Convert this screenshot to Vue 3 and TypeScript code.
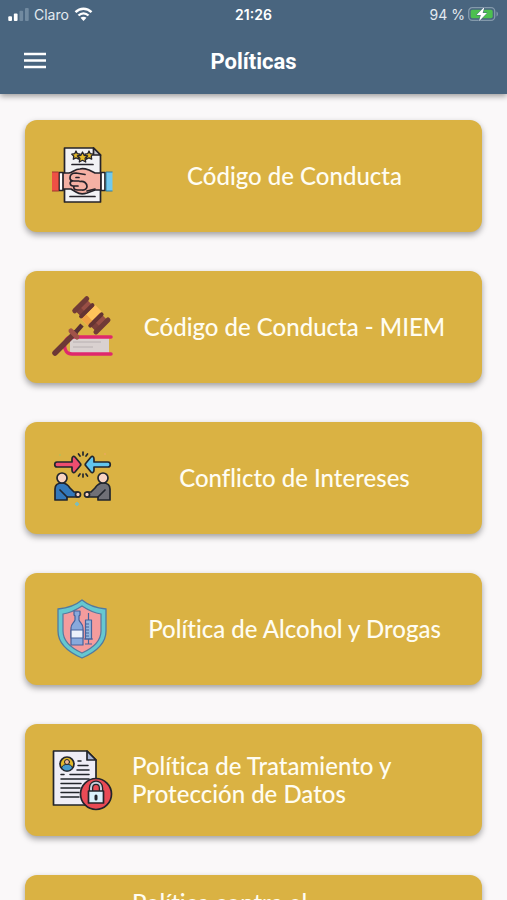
<script setup lang="ts">
type IconName = 'agreement' | 'gavel' | 'conflict' | 'shield' | 'privacy' | 'none'

interface Policy {
  title: string
  icon: IconName
}

const policies: Policy[] = [
  { title: 'Código de Conducta', icon: 'agreement' },
  { title: 'Código de Conducta - MIEM', icon: 'gavel' },
  { title: 'Conflicto de Intereses', icon: 'conflict' },
  { title: 'Política de Alcohol y Drogas', icon: 'shield' },
  { title: 'Política de Tratamiento y Protección de Datos', icon: 'privacy' },
  { title: 'Política contra el Hostigamiento Sexual en el Trabajo', icon: 'none' },
]
</script>

<template>
  <div class="screen">
    <header class="header">
      <div class="status">
        <div class="carrier">
          <svg class="signal" viewBox="0 0 22 14" aria-hidden="true">
            <rect x="0" y="9" width="4" height="5" rx="1" fill="#fff" />
            <rect x="6" y="6" width="4" height="8" rx="1" fill="#fff" />
            <rect x="12" y="3" width="4" height="11" rx="1" fill="#718aa0" />
            <rect x="18" y="0" width="4" height="14" rx="1" fill="#718aa0" />
          </svg>
          <span>Claro</span>
          <svg class="wifi" viewBox="0 0 18 14" aria-hidden="true">
            <g fill="none" stroke="#fff" stroke-width="2.4">
              <path d="M1 5.2C5.500.6 12.500.6 17 5.200" />
              <path d="M4 8.500c2.900-2.900 7.100-2.900 10 0" />
            </g>
            <path d="M9 14l-3-3.200c1.700-1.500 4.300-1.500 6 0z" fill="#fff" />
          </svg>
        </div>
        <time class="clock">21:26</time>
        <div class="power">
          <span>94 %</span>
          <svg class="battery" viewBox="0 0 31 16" aria-hidden="true">
            <rect x=".7" y="1.700" width="26" height="12.600" rx="3.500" fill="none" stroke="#8399ab" stroke-width="1.300" />
            <rect x="2.700" y="3.700" width="22" height="8.600" rx="1.800" fill="#4cc04f" />
            <path d="M28.500 5.500c2 .8 2 4.200 0 5z" fill="#8399ab" />
            <path d="M16.500.8 8.500 9h4.300l-1.800 6.200L19 7h-4.300z" fill="#fff" stroke="#49657f" stroke-width="1" paint-order="stroke" />
          </svg>
        </div>
      </div>
      <div class="toolbar">
        <button class="menu" type="button" aria-label="Menú">
          <svg viewBox="0 0 24 18" aria-hidden="true">
            <path d="M1 2h22M1 8.500h22M1 15h22" stroke="#fff" stroke-width="2.600" />
          </svg>
        </button>
        <h1 class="title">Políticas</h1>
      </div>
    </header>

    <main class="list">
      <button v-for="policy in policies" :key="policy.title" class="card" type="button">
        <svg v-if="policy.icon === 'agreement'" class="icon" viewBox="0 0 64 64" aria-hidden="true">
          <g stroke="#25232a" stroke-width="1.700" stroke-linejoin="round" stroke-linecap="round">
            <path d="M14.500 4h29l7 7v47h-36z" fill="#f2f2f5" />
            <path d="M43.500 4v7h7z" fill="#c4c4cc" />
            <path d="M22 20.500h21M20 52.500h25" fill="none" />
            <g fill="#e8bd2b" stroke-width="1.300">
              <path d="m26 7 1.300 2.700 3 .4-2.200 2.100.5 3-2.600-1.400-2.700 1.400.5-3-2.100-2.100 3-.4z" />
              <path d="m39 7 1.300 2.700 3 .4-2.100 2.100.5 3-2.700-1.400-2.600 1.400.5-3-2.200-2.100 3-.4z" />
              <path d="m32.500 8 1.600 3.300 3.600.5-2.600 2.500.6 3.700-3.200-1.700-3.200 1.700.6-3.700-2.600-2.500 3.600-.5z" />
            </g>
            <path d="M12 29h7c4-1 6-4 11-4 3-1 6 0 9 1l6 3h6v17h-6l-8 3c-3 1-8 1-11-1l-5-3h-9z" fill="#f5b1a4" />
            <path d="M35 30.500l-9-1.500c-4 0-6 2-6 5 0 2 2 3 4 3h5" fill="none" />
            <path d="M22 37c-3 1-2 5 1 5h5M24 42c-1 3 1 4 4 4h4M29 33.500h-3M30 37.500c4-1 7 2 7 5 0 2-2 4-5 3.500M45 45l-8 2" fill="none" />
            <path d="M9 28.500h4v18H9z" fill="#fff" />
            <path d="M51 28.500h4v18h-4z" fill="#fff" />
          </g>
          <path d="M2 28h7v19H2z" fill="#ee5145" />
          <path d="M2 28h6.500v19H2" fill="none" stroke="#a13830" />
          <path d="M56 28h6.500v19H56z" fill="#71c9ef" />
          <path d="M62.500 28H56v19h6.500" fill="none" stroke="#337d9f" />
        </svg>

        <svg v-else-if="policy.icon === 'gavel'" class="icon" viewBox="0 0 64 64" aria-hidden="true">
          <path d="M20 42h39v17H20z" fill="#d9d1d0" />
          <path d="M23 47h28M23 52h20" stroke="#b8b0b1" stroke-width="1" />
          <path d="M61 42H22c-10 0-10 17 0 17h39" fill="none" stroke="#df286d" stroke-width="3.500" stroke-linecap="round" />
          <path d="M5 58l20-20" stroke="#6c3836" stroke-width="5.500" stroke-linecap="round" />
          <path d="M25 38l7-8" stroke="#583034" stroke-width="4.500" />
          <path d="M21 36l6 6" stroke="#a15349" stroke-width="5" stroke-linecap="round" />
          <g transform="rotate(45 41 20)">
            <rect x="27" y="12" width="29" height="16" fill="#994f45" />
            <path d="M27 22h29v6H27z" fill="#7c3f3a" />
            <rect x="37" y="10" width="9" height="20" fill="#ffc35a" />
            <path d="M37 23h9v7h-9z" fill="#efa243" />
            <rect x="24" y="9" width="5" height="22" rx="2.500" fill="#713b37" />
            <rect x="33" y="10" width="4" height="20" rx="2" fill="#653433" />
            <rect x="46" y="10" width="4" height="20" rx="2" fill="#653433" />
            <rect x="54" y="9" width="5" height="22" rx="2.500" fill="#713b37" />
          </g>
        </svg>

        <svg v-else-if="policy.icon === 'conflict'" class="icon" viewBox="0 0 64 64" aria-hidden="true">
          <g stroke="#22262e" stroke-width="1.700" stroke-linejoin="round" stroke-linecap="round">
            <path d="M7 16h15v-3c0-3 2-3 3-2l5 6c1 1 1 2 0 3l-5 6c-1 1-3 1-3-2v-3H7c-3 0-3-5 0-5z" fill="#ef4d70" />
            <path d="M58 16H44v-3c0-3-2-3-3-2l-5 6c-1 1-1 2 0 3l5 6c1 1 3 1 3-2v-3h14c3 0 3-5 0-5z" fill="#62c5ed" />
            <path d="M28.500 8l1.500 2M33 6v3M37.500 8l-1.500 2M28.500 30l1.500-2M33 31v-3M37.500 30l-1.500-2" fill="none" />
            <path d="M5 54V43c0-4 3-6 7-6 4 0 6 2 8 5l4 4h4v5H17v3z" fill="#3378ba" />
            <path d="M60 54V43c0-4-3-6-7-6-4 0-6 2-8 5l-4 4h-4v5h11v3z" fill="#707077" />
            <path d="M10 44l7 7M55 44l-7 7" fill="none" />
            <circle cx="12" cy="32" r="5" fill="#f9d3c2" />
            <circle cx="53" cy="32" r="5" fill="#f9d3c2" />
            <circle cx="28" cy="48.500" r="2.500" fill="#f9d3c2" />
            <circle cx="37" cy="48.500" r="2.500" fill="#f9d3c2" />
          </g>
          <path d="M25 58h4M27 56v4" stroke="#82bdb5" stroke-width="2" />
          <circle cx="10" cy="9" r="1" fill="#b9bd57" />
          <circle cx="55" cy="8" r="1" fill="#e8aa5c" />
        </svg>

        <svg v-else-if="policy.icon === 'shield'" class="icon" viewBox="0 0 64 64" aria-hidden="true">
          <path d="M32 3c7 6 14 8 24 9v22c0 12-10 21-24 27C18 55 8 46 8 34V12c10-1 17-3 24-9z" fill="#66c8d0" stroke="#507aa1" stroke-width="1.300" />
          <path d="M32 9c6 4 12 7 19 8v17c0 10-8 17-19 22-11-5-19-12-19-22V17c7-1 13-4 19-8z" fill="#f49c9d" stroke="#58789f" stroke-width="1.200" />
          <g stroke="#46639c" stroke-width="1.200" stroke-linejoin="round">
            <path d="M24 14h6v4l-1 1v4c1 3 4 4 4 8v17H21V31c0-4 3-5 4-8v-4l-1-1z" fill="#88a9dc" />
            <path d="M21 33h12v8H21z" fill="#ecf1fb" />
            <path d="M35.500 23h6v19h-6z" fill="#94b8df" />
            <path d="M38.500 16v7M36 27h3M36 30h3M36 33h3M36 36h3M36 39h3M34 42h9M38.500 42v5M35 47h7" fill="none" />
          </g>
        </svg>

        <svg v-else-if="policy.icon === 'privacy'" class="icon" viewBox="0 0 64 64" aria-hidden="true">
          <g stroke="#22242b" stroke-width="1.700" stroke-linejoin="round" stroke-linecap="round">
            <path d="M3.500 3H37l9 9v45H3.500z" fill="#efedf6" />
            <path d="M37 3v9h9z" fill="#a9b5d5" />
            <circle cx="17" cy="16" r="7" fill="#e2b928" />
            <path d="M11.500 20c1-5 10-5 11 0-3 4-8 4-11 0z" fill="#469bce" stroke-width="1" />
            <circle cx="17" cy="14" r="2.500" fill="#efba99" stroke-width="1" />
            <path d="M28 13h3M28 17.500h10M27 22h12M11 26.500h3M20 26.500h19M11 31h28M11 35.500h20M11 40h19M11 44.500h18M11 49h18" fill="none" stroke-width="1.500" />
            <circle cx="46" cy="46" r="15.500" fill="#e94a55" />
            <path d="M41 43v-3c0-7 10-7 10 0v3" fill="none" stroke-width="4.500" />
            <path d="M41 43v-3c0-7 10-7 10 0v3" fill="none" stroke="#c8cedb" stroke-width="2" />
            <path d="M38.500 43h15v12h-15z" fill="#daf0fb" />
            <path d="M46 48v3" fill="none" stroke-width="3" />
          </g>
        </svg>

        <span v-else class="icon"></span>
        <span class="label"><span>{{ policy.title }}</span></span>
      </button>
    </main>
  </div>
</template>

<style>
body {
  margin: 0;
  background: #faf8f9;
}
</style>

<style scoped>
.screen {
  min-height: 100vh;
  background: #faf8f9;
  color: #fff;
  font-family: Inter, 'Liberation Sans', sans-serif;
}

.header {
  position: sticky;
  top: 0;
  z-index: 1;
  height: 94px;
  background: #49657f;
  box-shadow: 0 2px 6px rgba(0, 0, 0, 0.4);
}

.status {
  display: grid;
  grid-template-columns: 1fr auto 1fr;
  align-items: center;
  height: 28px;
  padding: 0 8px;
  font-size: 14px;
}

.carrier,
.power {
  display: flex;
  align-items: center;
  gap: 5px;
  color: #e3eaf0;
}

.power {
  justify-content: flex-end;
  gap: 3px;
}

.signal {
  width: 21px;
  height: 13px;
}

.wifi {
  width: 19px;
  height: 14px;
}

.battery {
  width: 31px;
  height: 16px;
}

.clock {
  font-weight: 600;
}

.toolbar {
  display: grid;
  grid-template-columns: 1fr auto 1fr;
  align-items: center;
  height: 66px;
  padding: 0 18px;
}

.menu {
  display: flex;
  justify-self: start;
  padding: 5px;
  border: 0;
  background: none;
  cursor: pointer;
}

.menu svg {
  width: 24px;
  height: 18px;
}

.title {
  margin: 0;
  font-family: Roboto, 'Liberation Sans', sans-serif;
  font-size: 22px;
  font-weight: 700;
}

.list {
  display: flex;
  flex-direction: column;
  gap: 39px;
  padding: 26px 25px;
}

.card {
  display: flex;
  align-items: center;
  gap: 18px;
  width: 100%;
  min-height: 112px;
  padding: 0 25px;
  border: 0;
  border-radius: 12px;
  background: #dab243;
  box-shadow: 0 3px 6px rgba(0, 0, 0, 0.36);
  color: #fffdf2;
  font-family: Lato, 'Open Sans', sans-serif;
  font-size: 24px;
  font-weight: 500;
  font-variant-ligatures: none;
  line-height: 28px;
  text-align: left;
  cursor: pointer;
}

.icon {
  flex: none;
  width: 64px;
  height: 64px;
}

.label {
  display: flex;
  flex: 1;
  justify-content: center;
}
</style>
